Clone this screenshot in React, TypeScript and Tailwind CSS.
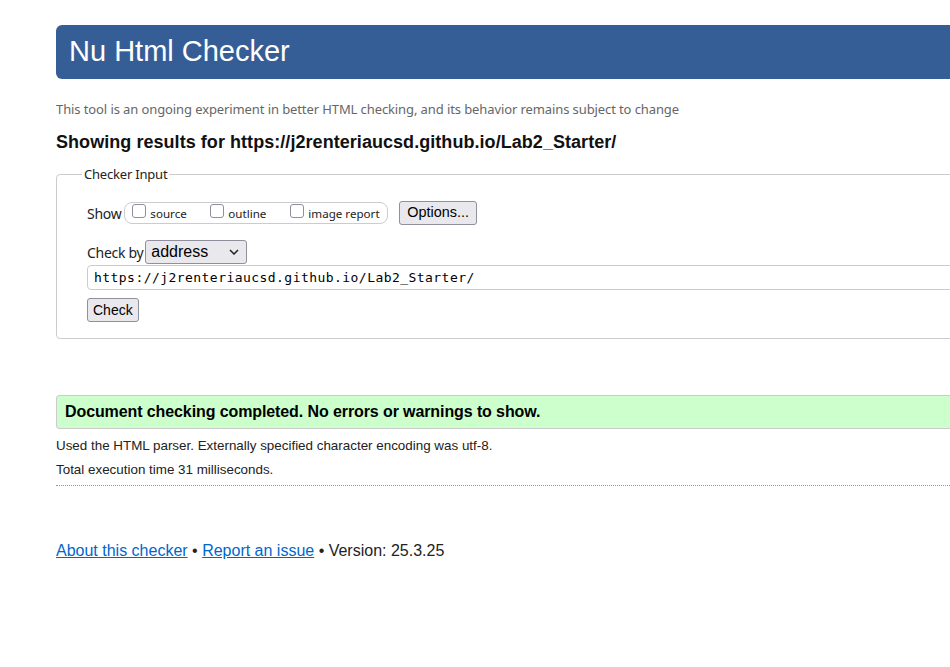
export default function App() {
  const sans = "font-['Liberation_Sans',Arial,sans-serif]";
  const ui = "font-['Noto_Sans',sans-serif]";

  return (
    <div className={`w-[950px] h-[667px] overflow-hidden bg-white text-[#222] ${sans}`}>
      <div className="w-[1200px] pl-14 pt-[25px]">
        <h1 className="h-[54px] bg-[#365e96] rounded-md pl-[13px] flex items-center text-white text-[29px]">
          Nu Html Checker
        </h1>

        <p className={`mt-[21px] text-[13px] text-[#666] ${ui} tracking-[-0.1px]`}>
          This tool is an ongoing experiment in better HTML checking, and its behavior remains subject to change
        </p>

        <h2 className="mt-[9px] text-[18px] font-bold text-[#111] tracking-[0.05px]">
          Showing results for https://j2renteriaucsd.github.io/Lab2_Starter/
        </h2>

        <fieldset className={`mt-[9px] border border-[#ccc] rounded-[4px] h-[174px] pl-[30px] ${ui}`}>
          <legend className="ml-[-5px] px-[2px] text-[13px] text-[#222] tracking-[-0.2px]">Checker Input</legend>

          <div className="mt-[17px] flex items-center">
            <span className="text-[14px] tracking-[-0.3px]">Show</span>
            <div className="ml-[3px] h-[22px] w-[264px] border border-[#ccc] rounded-[8px] flex items-center pl-[7px]">
              <label className="flex items-center w-[78px]">
                <span className="w-[14px] h-[14px] border border-[#8f8f9d] rounded-[3px] mb-[4px]" />
                <span className="ml-[4px] text-[11.6px] mt-[2px]">source</span>
              </label>
              <label className="flex items-center w-[80px]">
                <span className="w-[14px] h-[14px] border border-[#8f8f9d] rounded-[3px] mb-[4px]" />
                <span className="ml-[4px] text-[11.6px] mt-[2px]">outline</span>
              </label>
              <label className="flex items-center">
                <span className="w-[14px] h-[14px] border border-[#8f8f9d] rounded-[3px] mb-[4px]" />
                <span className="ml-[4px] text-[11.6px] mt-[2px]">image report</span>
              </label>
            </div>
            <button className={`ml-[11px] h-[24px] px-[7px] bg-[#e9e9ed] border border-[#8f8f9d] rounded-[3px] text-[14.4px] text-black ${sans}`}>
              Options...
            </button>
          </div>

          <div className="mt-[15px] flex items-center">
            <span className="text-[14px] tracking-[-0.3px]">Check by</span>
            <div className={`ml-[2px] h-[24px] w-[102px] bg-[#e9e9ed] border border-[#8f8f9d] rounded-[3px] flex items-center justify-between pl-[5px] pr-[7px] text-[16px] text-black ${sans}`}>
              <span>address</span>
              <svg width="10" height="6" viewBox="0 0 10 6" fill="none" stroke="#222" strokeWidth="1.5">
                <path d="M1 1l4 4 4-4" />
              </svg>
            </div>
          </div>

          <div className="mt-[1px] h-[25px] border border-[#ccc] rounded-[4px] flex items-center pl-[6px] font-['DejaVu_Sans_Mono',monospace] text-[13px] text-black tracking-[0.45px]">
            https://j2renteriaucsd.github.io/Lab2_Starter/
          </div>

          <button className={`mt-[8px] h-[24px] px-[5px] bg-[#e9e9ed] border border-[#8f8f9d] rounded-[3px] text-[14px] text-black ${sans}`}>
            Check
          </button>
        </fieldset>

        <div className="mt-[56px] h-[34px] bg-[#ccffcc] border border-[#ccc] rounded-[3px] pl-[8px] flex items-center text-[16px] font-bold text-black tracking-[-0.1px]">
          Document checking completed. No errors or warnings to show.
        </div>

        <p className="mt-[7px] text-[13.4px] leading-[20px] text-[#222]">
          Used the HTML parser. Externally specified character encoding was utf-8.
        </p>
        <p className="mt-[4px] text-[13.4px] leading-[20px] text-[#222]">Total execution time 31 milliseconds.</p>
        <div className="mt-[5px] border-t border-dotted border-[#999]" />

        <p className="mt-[53px] text-[16px] leading-[24px] text-[#222]">
          <a href="#" className="text-[#0066cc] underline">About this checker</a>
          {" • "}
          <a href="#" className="text-[#0066cc] underline">Report an issue</a>
          {" • Version: 25.3.25"}
        </p>
      </div>
    </div>
  );
}
